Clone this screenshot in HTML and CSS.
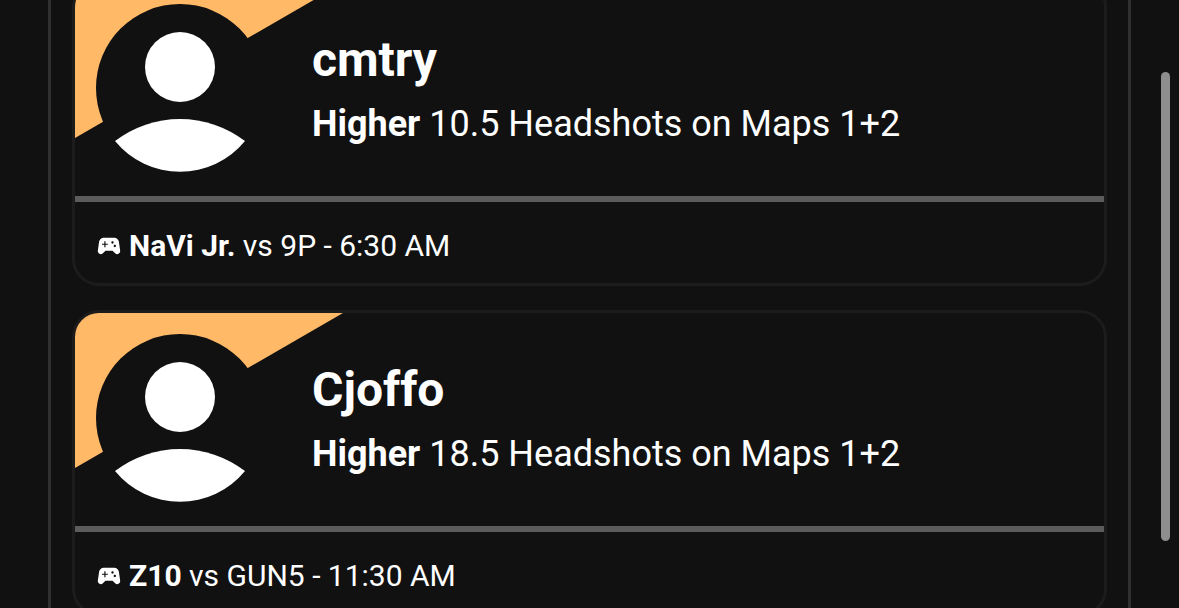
FILE: index.html
```html
<!DOCTYPE html>
<html lang="en">
<head>
<meta charset="utf-8">
<title>Picks</title>
<link rel="stylesheet" href="styles.css">
</head>
<body>
<main class="panel">
  <article class="card">
    <div class="hero">
      <div class="accent"></div>
      <svg class="avatar" viewBox="0 0 168 168" aria-hidden="true"><circle cx="84" cy="84" r="84" fill="#111"/><circle cx="84" cy="63" r="35" fill="#fff"/><path d="M19 137A84 84 0 0 0 149 137A107 107 0 0 0 19 137Z" fill="#fff"/></svg>
      <div class="info">
        <h2 class="name">cmtry</h2>
        <p class="line"><strong>Higher</strong> 10.5 Headshots on Maps 1+2</p>
      </div>
    </div>
    <div class="rule"></div>
    <div class="foot">
      <svg class="pad" viewBox="0 0 24 24" aria-hidden="true"><path d="M21.58 16.09l-1.09-7.66C20.21 6.46 18.52 5 16.53 5H7.47C5.48 5 3.79 6.46 3.51 8.43l-1.09 7.66C2.2 17.63 3.39 19 4.94 19c.68 0 1.32-.27 1.8-.75L9 16h6l2.25 2.25c.48.48 1.13.75 1.8.75 1.56 0 2.75-1.37 2.53-2.91zM11 11H9v2H8v-2H6v-1h2V8h1v2h2v1zm4-1c-.55 0-1-.45-1-1s.45-1 1-1 1 .45 1 1-.45 1-1 1zm2 3c-.55 0-1-.45-1-1s.45-1 1-1 1 .45 1 1-.45 1-1 1z"/></svg>
      <span><strong>NaVi Jr.</strong> vs 9P - 6:30 AM</span>
    </div>
  </article>
  <article class="card">
    <div class="hero">
      <div class="accent"></div>
      <svg class="avatar" viewBox="0 0 168 168" aria-hidden="true"><circle cx="84" cy="84" r="84" fill="#111"/><circle cx="84" cy="63" r="35" fill="#fff"/><path d="M19 137A84 84 0 0 0 149 137A107 107 0 0 0 19 137Z" fill="#fff"/></svg>
      <div class="info">
        <h2 class="name">Cjoffo</h2>
        <p class="line"><strong>Higher</strong> 18.5 Headshots on Maps 1+2</p>
      </div>
    </div>
    <div class="rule"></div>
    <div class="foot">
      <svg class="pad" viewBox="0 0 24 24" aria-hidden="true"><path d="M21.58 16.09l-1.09-7.66C20.21 6.46 18.52 5 16.53 5H7.47C5.48 5 3.79 6.46 3.51 8.43l-1.09 7.66C2.2 17.63 3.39 19 4.94 19c.68 0 1.32-.27 1.8-.75L9 16h6l2.25 2.25c.48.48 1.13.75 1.8.75 1.56 0 2.75-1.37 2.53-2.91zM11 11H9v2H8v-2H6v-1h2V8h1v2h2v1zm4-1c-.55 0-1-.45-1-1s.45-1 1-1 1 .45 1 1-.45 1-1 1zm2 3c-.55 0-1-.45-1-1s.45-1 1-1 1 .45 1 1-.45 1-1 1z"/></svg>
      <span><strong>Z10</strong> vs GUN5 - 11:30 AM</span>
    </div>
  </article>
</main>
<div class="thumb"></div>
</body>
</html>
```

FILE: styles.css
```css
* { box-sizing: border-box; }
html, body { height: 100%; }
body {
  margin: 0;
  height: 608px;
  overflow: hidden;
  background: #111;
  color: #fff;
  font-family: Roboto, "Liberation Sans", sans-serif;
}
.panel {
  width: 1083px;
  margin: -20px 0 0 48px;
  padding: 0 21px;
  border-left: 3px solid #303030;
  border-right: 3px solid #303030;
  display: flex;
  flex-direction: column;
  gap: 24px;
}
.card {
  width: 1035px;
  height: 306px;
  border: 3px solid #1c1c1c;
  border-radius: 27px;
  overflow: hidden;
  display: flex;
  flex-direction: column;
  flex: none;
}
.hero {
  position: relative;
  height: 213px;
  padding: 21px 0 0 21px;
  display: flex;
  gap: 48px;
  flex: none;
}
.accent {
  position: absolute;
  inset: 0 auto auto 0;
  width: 268px;
  height: 155px;
  background: #ffb967;
  clip-path: polygon(0 0, 100% 0, 0 100%);
}
.avatar {
  position: relative;
  width: 168px;
  height: 168px;
  flex: none;
}
.info {
  position: relative;
  padding-top: 28px;
}
.name {
  margin: 0;
  font-size: 48px;
  line-height: 56px;
  font-weight: 700;
}
.line {
  margin: 15px 0 0;
  font-size: 36px;
  line-height: 42px;
  font-weight: 400;
}
.rule {
  height: 6px;
  background: #5c5c5c;
  flex: none;
}
.foot {
  flex: 1;
  display: flex;
  align-items: center;
  gap: 6px;
  padding: 6px 0 0 20px;
  font-size: 30px;
}
.pad {
  width: 28px;
  height: 28px;
  fill: #fff;
  flex: none;
}
.thumb {
  position: absolute;
  left: 1161px;
  top: 72px;
  width: 9px;
  height: 469px;
  border-radius: 5px;
  background: #8e8e8e;
}
```
